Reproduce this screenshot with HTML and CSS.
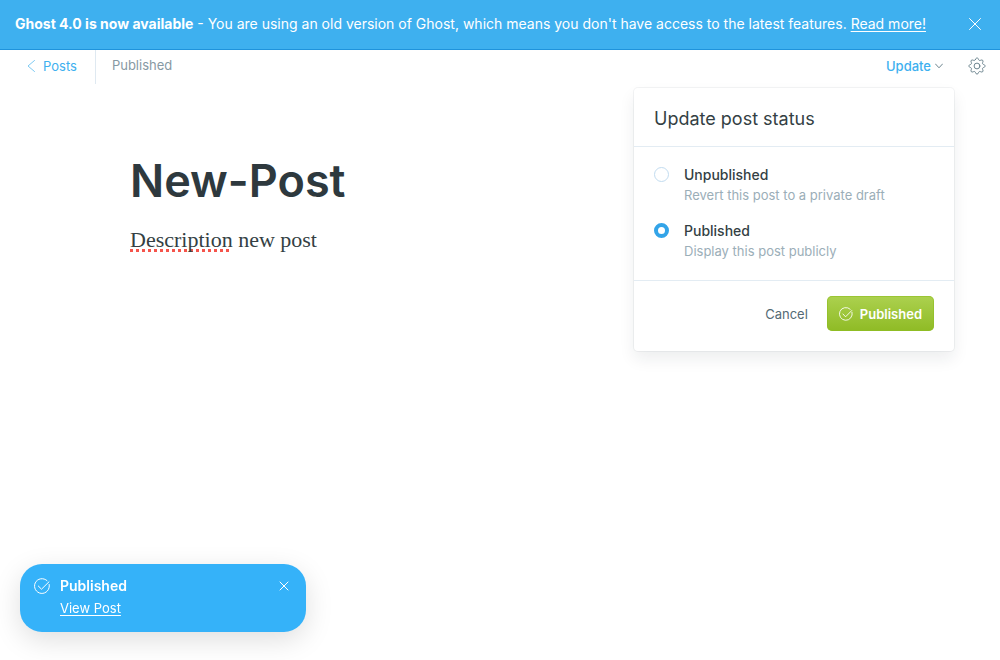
FILE: index.html
```html
<!DOCTYPE html>
<html lang="en">
<head>
<meta charset="utf-8">
<meta name="viewport" content="width=device-width, initial-scale=1">
<title>New-Post</title>
<link rel="stylesheet" href="styles.css">
</head>
<body>
<aside class="banner">
  <p class="banner-text"><strong>Ghost 4.0 is now available</strong> - You are using an old version of Ghost, which means you don't have access to the latest features. <a href="#">Read more!</a></p>
  <button class="icon-button" type="button" aria-label="Dismiss"><svg width="14" height="14" viewBox="0 0 14 14"><path d="M1.500 1.500l11 11m0-11l-11 11"/></svg></button>
</aside>
<header class="toolbar">
  <a class="back" href="#"><svg width="8" height="12" viewBox="0 0 8 12"><path d="M7.500.5L1 6l6.500 5.500"/></svg>Posts</a>
  <span class="status">Published</span>
  <div class="tools">
    <button class="update" type="button">Update<svg width="8" height="6" viewBox="0 0 8 6"><path d="M.5 1L4 4.800 7.500 1"/></svg></button>
    <button class="icon-button gear" type="button" aria-label="Settings"><svg width="18" height="18" viewBox="0 0 18 18"><circle cx="9" cy="9" r="2.900"/><path d="M7.500 2.400C8 .4 10 .4 10.500 2.400c.3 1.100 1.200 1.400 2.100.9 1.800-1 3.100.3 2.100 2.100-.5.900-.2 1.800.9 2.100 2 .5 2 2.500 0 3-1.100.3-1.400 1.200-.9 2.100 1 1.800-.3 3.100-2.100 2.100-.9-.5-1.800-.2-2.100.9-.5 2-2.500 2-3 0-.3-1.100-1.200-1.400-2.100-.9-1.800 1-3.100-.3-2.100-2.100.5-.9.2-1.800-.9-2.100-2-.5-2-2.500 0-3 1.100-.3 1.400-1.200.9-2.100-1-1.800.3-3.100 2.100-2.100.9.5 1.800.2 2.100-.9z"/></svg></button>
    <form class="menu">
      <h2 class="menu-title">Update post status</h2>
      <div class="options">
        <label class="option"><input type="radio" name="status"><span class="option-text"><span class="option-name">Unpublished</span><span class="option-hint">Revert this post to a private draft</span></span></label>
        <label class="option"><input type="radio" name="status" checked><span class="option-text"><span class="option-name">Published</span><span class="option-hint">Display this post publicly</span></span></label>
      </div>
      <div class="menu-footer">
        <button class="cancel" type="button">Cancel</button>
        <button class="publish" type="button"><svg width="14" height="14" viewBox="0 0 16 16"><path d="M14.900 6A7.300 7.300 0 1 1 12.800 2.500M4.500 8l3 3.200L14.600 4"/></svg>Published</button>
      </div>
    </form>
  </div>
</header>
<main class="editor">
  <h1 class="title">New-Post</h1>
  <p class="body"><span class="misspelt">Description</span> new post</p>
</main>
<div class="toast" role="status">
  <svg class="toast-icon" width="16" height="16" viewBox="0 0 16 16"><path d="M15.200 6.500A7.400 7.400 0 1 1 13 2.600M4.300 8l3.200 3.200L15 3.800"/></svg>
  <div class="toast-text"><strong>Published</strong><a href="#">View Post</a></div>
  <button class="icon-button" type="button" aria-label="Close"><svg width="10" height="10" viewBox="0 0 10 10"><path d="M1 1l8 8m0-8L1 9"/></svg></button>
</div>
</body>
</html>
```
FILE: styles.css
```css
* { box-sizing: border-box; }
body {
  margin: 0;
  min-height: 100vh;
  background: #fff;
  color: #343f44;
  font: 14px/20px Inter, "Open Sans", sans-serif;
}
h1, h2, p { margin: 0; }
button { padding: 0; border: 0; background: none; font: inherit; cursor: pointer; }
svg { flex: none; fill: none; stroke: currentColor; stroke-linecap: round; stroke-linejoin: round; }
.icon-button { display: flex; color: inherit; }

.banner {
  display: flex;
  align-items: center;
  justify-content: space-between;
  min-height: 50px;
  padding: 0 18px 2px 15px;
  border-bottom: 1px solid #1f93dc;
  background: #3eb0ef;
  color: #fff;
}
.banner a, .toast a { color: inherit; text-underline-offset: 2px; }

.toolbar { display: flex; align-items: flex-start; }
.back {
  display: flex;
  align-items: center;
  gap: 8px;
  padding: 6px 18px 8px 27px;
  border-right: 1px solid #dfe9f1;
  color: #3eb0ef;
  font-size: 13px;
  text-decoration: none;
}
.back svg { stroke: #7cc9f3; }
.status { padding: 5px 16px; color: #8799a3; font-size: 13px; }
.tools {
  position: relative;
  display: flex;
  align-items: center;
  gap: 25px;
  margin-left: auto;
  padding: 6px 14px 0 0;
}
.update { display: flex; align-items: center; gap: 4px; color: #3eb0ef; font-size: 13px; font-weight: 500; }
.update svg, .gear { color: #6d858f; }

.menu {
  position: absolute;
  top: 38px;
  right: 46px;
  width: 320px;
  border-radius: 4px;
  background: #fff;
  box-shadow: 0 0 0 1px rgba(99, 114, 130, 0.08), 0 8px 16px rgba(27, 39, 51, 0.08);
}
.menu-title { padding: 19px 20px 15px; font-size: 18px; font-weight: 400; line-height: 24px; }
.options {
  display: grid;
  gap: 16px;
  padding: 18px 20px 19px;
  border: solid #e3ecf3;
  border-width: 1px 0;
}
.option { display: flex; gap: 15px; }
.option input {
  appearance: none;
  flex: none;
  width: 15px;
  height: 15px;
  margin: 2px 0 0;
  border: 1px solid #c2dcf0;
  border-radius: 50%;
  background: #fff;
}
.option input:checked { border: 4px solid #33a4e8; }
.option-text { display: grid; }
.option-name { font-weight: 500; }
.option-hint { color: #9baeb8; font-size: 13px; }
.menu-footer {
  display: flex;
  align-items: center;
  justify-content: flex-end;
  gap: 19px;
  padding: 15px 20px 20px;
  font-size: 13px;
}
.cancel { color: #546a74; }
.publish {
  display: flex;
  align-items: center;
  gap: 7px;
  height: 35px;
  padding: 0 12px;
  border-radius: 5px;
  background: linear-gradient(#acd14f, #8fbb25);
  box-shadow: inset 0 0 0 1px rgba(144, 190, 35, 0.6);
  color: #fff;
  font-weight: 600;
}

.editor { padding: 66px 130px; }
.title { color: #2e393e; font-size: 45px; font-weight: 600; line-height: 62px; }
.body { margin-top: 13px; font: 22px/30px "Liberation Serif", serif; }
.misspelt { text-decoration: underline dotted #f5544b 3px; text-underline-offset: 2px; text-decoration-skip-ink: none; }

.toast {
  position: fixed;
  bottom: 28px;
  left: 20px;
  display: flex;
  align-items: flex-start;
  gap: 10px;
  width: 286px;
  padding: 12px 17px 14px 14px;
  border-radius: 22px;
  background: #35b2f9;
  box-shadow: 0 8px 28px rgba(0, 0, 0, 0.13);
  color: #fff;
}
.toast-icon { margin-top: 2px; }
.toast-text { display: grid; flex: 1; gap: 2px; justify-items: start; }
.toast strong { font-weight: 600; }
.toast a { font-size: 13px; }
.toast .icon-button { margin-top: 5px; }
```
